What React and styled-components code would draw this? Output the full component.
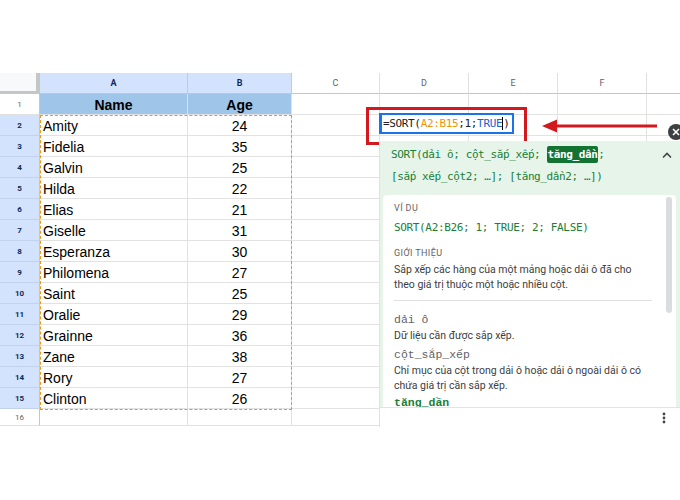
import React from "react";
import styled, { createGlobalStyle } from "styled-components";

const Global = createGlobalStyle`
  html, body { margin: 0; padding: 0; background: #fff; overflow: hidden; }
  body { width: 680px; height: 500px; font-family: "Liberation Sans", Arial, sans-serif; }
`;

const Page = styled.div`
  position: relative;
  width: 680px;
  height: 500px;
  overflow: hidden;
  padding-top: 73px;
  box-sizing: border-box;
`;

const Grid = styled.div`
  display: grid;
  grid-template-columns: 40px 148px 104px 88px 89px 89px 89px 40px;
  grid-template-rows: 21px repeat(15, 21px) 17px;
`;

const Corner = styled.div`
  background: #f8f9fa;
  border-right: 4px solid #c4c7c5;
  border-bottom: 3px solid #c4c7c5;
  box-sizing: border-box;
`;

const ColHead = styled.div`
  display: flex;
  align-items: center;
  justify-content: center;
  font-family: "Roboto", "Liberation Sans", sans-serif;
  font-size: 9px;
  font-weight: ${(p) => (p.$sel ? 700 : 400)};
  color: ${(p) => (p.$sel ? "#0b2a5b" : "#5f6368")};
  background: ${(p) => (p.$sel ? "#d3e3fd" : "#fff")};
  border-right: 1px solid ${(p) => (p.$sel ? "#bccbe4" : "#e0e0e0")};
  border-bottom: 1px solid #c4c7c5;
  box-sizing: border-box;
`;

const RowHead = styled.div`
  display: flex;
  align-items: center;
  justify-content: center;
  font-family: "Roboto", "Liberation Sans", sans-serif;
  font-size: 8px;
  font-weight: ${(p) => (p.$sel ? 700 : 400)};
  color: ${(p) => (p.$sel ? "#0b2a5b" : "#5f6368")};
  background: ${(p) => (p.$sel ? "#d3e3fd" : "#fff")};
  border-right: 1px solid #c4c7c5;
  border-bottom: 1px solid ${(p) => (p.$sel ? "#c2d2ec" : "#e0e0e0")};
  box-sizing: border-box;
`;

const Cell = styled.div`
  display: flex;
  align-items: center;
  justify-content: ${(p) => (p.$center ? "center" : "flex-start")};
  padding: 1px 3px 0;
  font-size: 14px;
  font-weight: ${(p) => (p.$head ? 700 : 400)};
  color: #000;
  background: ${(p) => (p.$head ? "#9fc5e8" : "#fff")};
  border-right: 1px solid #e2e2e2;
  border-bottom: 1px solid #e2e2e2;
  box-sizing: border-box;
  white-space: nowrap;
  overflow: hidden;
`;

const Selection = styled.div`
  position: absolute;
  left: 40px;
  top: 115px;
  width: 252px;
  height: 295px;
  border: 1px dashed #f29900;
  box-sizing: border-box;
  pointer-events: none;
`;

const RedBox = styled.div`
  position: absolute;
  left: 366px;
  top: 107px;
  width: 161px;
  height: 38px;
  border: 3px solid #d3181e;
  box-sizing: border-box;
`;

const Editor = styled.div`
  position: absolute;
  left: 379px;
  top: 113px;
  width: 135px;
  height: 21px;
  background: #fff;
  border: 2px solid #1a73e8;
  border-left-width: 3px;
  box-sizing: border-box;
  display: flex;
  align-items: center;
  padding-left: 1px;
  font-family: "DejaVu Sans Mono", monospace;
  font-size: 11px;
  letter-spacing: -0.35px;
  color: #202124;
  white-space: nowrap;
`;

const Tok = styled.span`
  color: ${(p) => p.$c || "#202124"};
`;

const Caret = styled.span`
  display: inline-block;
  width: 1px;
  height: 13px;
  background: #000;
  vertical-align: middle;
`;

const Arrow = styled.svg`
  position: absolute;
  left: 540px;
  top: 118px;
`;

const CloseBtn = styled.div`
  position: absolute;
  left: 668px;
  top: 124px;
  width: 16px;
  height: 16px;
  border-radius: 50%;
  background: #3c4043;
  display: flex;
  align-items: center;
  justify-content: center;
`;

const Panel = styled.div`
  position: absolute;
  left: 379px;
  top: 141px;
  width: 310px;
  height: 286px;
  background: #e6f4ea;
  border-left: 1px solid #d5e8da;
  box-sizing: border-box;
  display: flex;
  flex-direction: column;
`;

const PanelHead = styled.div`
  position: relative;
  padding: 3px 0 7px 11px;
  font-family: "DejaVu Sans Mono", monospace;
  font-size: 11px;
  letter-spacing: -0.4px;
  line-height: 22px;
  color: #188038;
  white-space: nowrap;
`;

const Hl = styled.span`
  background: #137333;
  color: #fff;
  font-weight: 700;
  border-radius: 2px;
  padding: 2px 1px;
`;

const Chevron = styled.svg`
  position: absolute;
  left: 281px;
  top: 10px;
`;

const Card = styled.div`
  position: relative;
  flex: 1;
  margin: 0 4px 0 3px;
  width: 293px;
  background: #fff;
  border-radius: 4px 4px 0 0;
  padding: 3px 24px 0 11px;
  box-sizing: border-box;
  overflow: hidden;
`;

const Scroll = styled.div`
  position: absolute;
  right: 4px;
  top: 2px;
  width: 6px;
  height: 116px;
  border-radius: 3px;
  background: #dadce0;
`;

const Label = styled.div`
  margin-top: ${(p) => p.$mt || 0}px;
  font-family: "Roboto", "Liberation Sans", sans-serif;
  font-size: 9px;
  line-height: 14px;
  letter-spacing: 0.4px;
  color: #5f6368;
`;

const Example = styled.div`
  margin-top: 4px;
  font-family: "DejaVu Sans Mono", monospace;
  font-size: 11px;
  letter-spacing: -0.35px;
  line-height: 18px;
  color: #188038;
  white-space: nowrap;
`;

const Desc = styled.div`
  margin-top: ${(p) => p.$mt || 0}px;
  font-family: "Roboto", "Liberation Sans", sans-serif;
  font-size: 10.5px;
  line-height: 15px;
  color: #3c4043;
`;

const Divider = styled.div`
  margin-top: 8px;
  height: 1px;
  background: #e0e0e0;
  width: 258px;
`;

const Param = styled.div`
  margin-top: ${(p) => p.$mt || 0}px;
  font-family: "Liberation Mono", "Courier New", monospace;
  font-size: 11.5px;
  line-height: ${(p) => (p.$active ? 12 : 16)}px;
  color: ${(p) => (p.$active ? "#188038" : "#5f6368")};
  font-weight: ${(p) => (p.$active ? 700 : 400)};
`;

const Footer = styled.div`
  height: 20px;
  background: #fff;
  border-top: 1px solid #dfe6e1;
  box-sizing: border-box;
  display: flex;
  align-items: center;
  padding-left: 282px;
`;

const cols = ["A", "B", "C", "D", "E", "F", ""];
const data = [
  ["Amity", 24],
  ["Fidelia", 35],
  ["Galvin", 25],
  ["Hilda", 22],
  ["Elias", 21],
  ["Giselle", 31],
  ["Esperanza", 30],
  ["Philomena", 27],
  ["Saint", 25],
  ["Oralie", 29],
  ["Grainne", 36],
  ["Zane", 38],
  ["Rory", 27],
  ["Clinton", 26],
];

function EmptyCells({ n }) {
  return Array.from({ length: n }).map((_, i) => <Cell key={i} />);
}

export default function App() {
  return (
    <Page>
      <Global />
      <Grid>
        <Corner />
        {cols.map((c, i) => (
          <ColHead key={i} $sel={c === "A" || c === "B"}>
            {c}
          </ColHead>
        ))}
        <RowHead>1</RowHead>
        <Cell $head $center>Name</Cell>
        <Cell $head $center>Age</Cell>
        <EmptyCells n={5} />
        {data.map(([name, age], i) => (
          <React.Fragment key={name}>
            <RowHead $sel>{i + 2}</RowHead>
            <Cell>{name}</Cell>
            <Cell $center>{age}</Cell>
            <EmptyCells n={5} />
          </React.Fragment>
        ))}
        <RowHead>16</RowHead>
        <EmptyCells n={7} />
      </Grid>

      <Selection />
      <Editor>
        <Tok>=SORT(</Tok>
        <Tok $c="#f09300">A2:B15</Tok>
        <Tok>;1;</Tok>
        <Tok $c="#1a5fd6">TRUE</Tok>
        <Caret />
        <Tok>)</Tok>
      </Editor>
      <RedBox />

      <Arrow width="120" height="16" viewBox="0 0 120 16">
        <line x1="14" y1="8" x2="117" y2="8" stroke="#d3181e" strokeWidth="3" />
        <polygon points="2,8 17,1.5 17,14.5" fill="#d3181e" />
      </Arrow>

      <Panel>
        <PanelHead>
          <div>
            SORT(dải ô; cột_sắp_xếp; <Hl>tăng_dần</Hl>;
          </div>
          <div>[sắp xếp_cột2; …]; [tăng_dần2; …])</div>
          <Chevron width="12" height="8" viewBox="0 0 12 8">
            <path d="M2 6.5 L6 2.5 L10 6.5" fill="none" stroke="#444746" strokeWidth="1.6" />
          </Chevron>
        </PanelHead>
        <Card>
          <Scroll />
          <Label $mt={3}>VÍ DỤ</Label>
          <Example>SORT(A2:B26; 1; TRUE; 2; FALSE)</Example>
          <Label $mt={9}>GIỚI THIỆU</Label>
          <Desc $mt={2}>
            Sắp xếp các hàng của một mảng hoặc dải ô đã cho
            <br />
            theo giá trị thuộc một hoặc nhiều cột.
          </Desc>
          <Divider />
          <Param $mt={11}>dải ô</Param>
          <Desc>Dữ liệu cần được sắp xếp.</Desc>
          <Param $mt={4}>cột_sắp_xếp</Param>
          <Desc>
            Chỉ mục của cột trong dải ô hoặc dải ô ngoài dải ô có
            <br />
            chứa giá trị cần sắp xếp.
          </Desc>
          <Param $mt={4} $active>tăng_dần</Param>
        </Card>
        <Footer>
          <svg width="4" height="12" viewBox="0 0 4 12">
            <circle cx="2" cy="2" r="1.4" fill="#444746" />
            <circle cx="2" cy="6" r="1.4" fill="#444746" />
            <circle cx="2" cy="10" r="1.4" fill="#444746" />
          </svg>
        </Footer>
      </Panel>

      <CloseBtn>
        <svg width="8" height="8" viewBox="0 0 8 8">
          <path d="M1 1 L7 7 M7 1 L1 7" stroke="#fff" strokeWidth="1.6" />
        </svg>
      </CloseBtn>
    </Page>
  );
}
